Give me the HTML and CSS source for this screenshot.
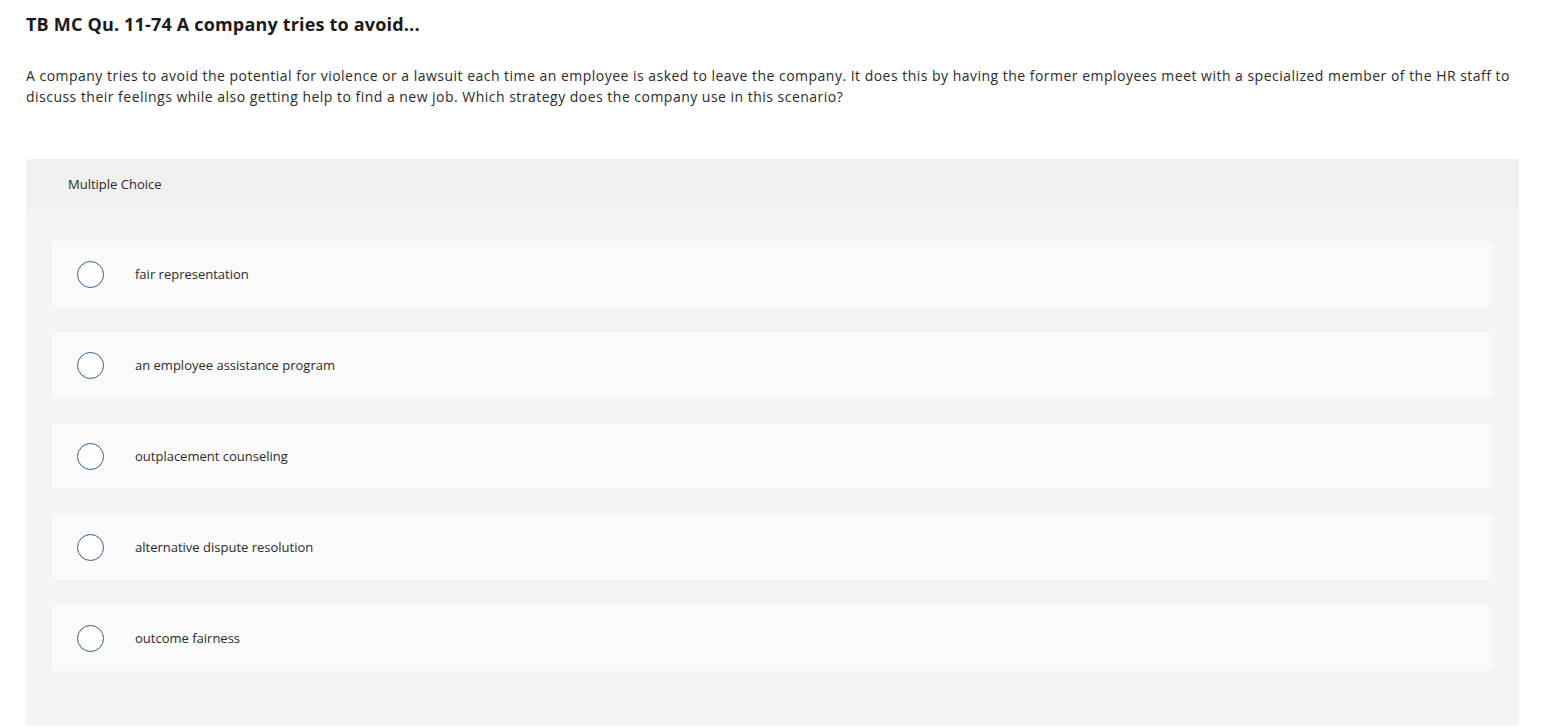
FILE: index.html
```html
<!DOCTYPE html>
<html lang="en">
<head>
<meta charset="utf-8">
<title>TB MC Qu. 11-74</title>
<link rel="stylesheet" href="styles.css">
</head>
<body>
<main class="page">
  <h1 class="title">TB MC Qu. 11-74 A company tries to avoid...</h1>
  <p class="prompt">A company tries to avoid the potential for violence or a lawsuit each time an employee is asked to leave the company. It does this by having the former employees meet with a specialized member of the HR staff to discuss their feelings while also getting help to find a new job. Which strategy does the company use in this scenario?</p>
  <section class="card">
    <div class="card-head">Multiple Choice</div>
    <ul class="choices">
      <li class="choice"><span class="radio"></span><span class="label">fair representation</span></li>
      <li class="choice"><span class="radio"></span><span class="label">an employee assistance program</span></li>
      <li class="choice"><span class="radio"></span><span class="label">outplacement counseling</span></li>
      <li class="choice"><span class="radio"></span><span class="label">alternative dispute resolution</span></li>
      <li class="choice"><span class="radio"></span><span class="label">outcome fairness</span></li>
    </ul>
  </section>
</main>
</body>
</html>
```
FILE: styles.css
```css
html, body {
  margin: 0;
  padding: 0;
  background: #ffffff;
}
body {
  font-family: "Open Sans", Lato, "Liberation Sans", sans-serif;
  color: #222222;
}
.page {
  width: 1493px;
  padding: 12px 0 0 26px;
}
.title {
  margin: 0;
  font-size: 18px;
  line-height: 25px;
  font-weight: 700;
  letter-spacing: 0.18px;
  color: #1a1a1a;
}
.prompt {
  margin: 28px 0 0 0;
  font-size: 14px;
  line-height: 21px;
  letter-spacing: 0.48px;
  color: #2a2a2a;
}
.card {
  margin-top: 52px;
  background: #f4f4f4;
  border-radius: 2px;
  height: 567px;
}
.card-head {
  height: 50px;
  background: #f0f0f0;
  border-radius: 2px 2px 0 0;
  padding-left: 42px;
  display: flex;
  align-items: center;
  font-size: 13px;
  color: #2a2a2a;
}
.choices {
  list-style: none;
  margin: 0;
  padding: 32px 28px 0 26px;
  display: flex;
  flex-direction: column;
  gap: 25px;
}
.choice {
  height: 66px;
  background: #fafafa;
  border-radius: 3px;
  display: flex;
  align-items: center;
  padding-left: 25px;
}
.radio {
  width: 25px;
  height: 25px;
  border: 1.5px solid #2f5d8c;
  border-radius: 50%;
  background: #ffffff;
  flex: none;
}
.label {
  margin-left: 31px;
  font-size: 13px;
  color: #2a2a2a;
}
```
